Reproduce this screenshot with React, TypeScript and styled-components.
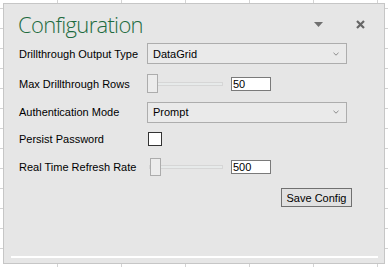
import React from "react";
import styled, { createGlobalStyle } from "styled-components";

const GlobalStyle = createGlobalStyle`
  html, body { margin: 0; padding: 0; }
  body {
    box-sizing: border-box;
    width: 388px;
    height: 267px;
    overflow: hidden;
    padding: 3px 0 0 3px;
    background-color: #ffffff;
    background-image:
      linear-gradient(to right, #d4d4d4 1px, transparent 1px),
      linear-gradient(to bottom, #d4d4d4 1px, transparent 1px);
    background-size: 64px 20px;
    background-position: 57px 8px;
    font-family: "Liberation Sans", Arial, sans-serif;
  }
`;

const Panel = styled.div`
  box-sizing: border-box;
  width: 382px;
  height: 261px;
  background: #e6e6e6;
  border: 1px solid #c6c6c6;
  display: flex;
  flex-direction: column;
`;

const Header = styled.div`
  display: flex;
  align-items: center;
  height: 29px;
  margin-top: 6px;
  padding: 0 19px 0 14px;
`;

const Title = styled.h1`
  flex: 1;
  margin: 0;
  font-family: "Segoe UI Light", "Open Sans", sans-serif;
  font-weight: 300;
  font-size: 22px;
  line-height: 29px;
  letter-spacing: -0.7px;
  color: #1d6b3e;
`;

const IconButton = styled.span<{ $gap: number }>`
  display: flex;
  align-items: center;
  justify-content: center;
  margin-left: ${(p) => p.$gap}px;
`;

const Form = styled.div`
  display: flex;
  flex-direction: column;
  padding-left: 15px;
`;

const Row = styled.div<{ $h: number }>`
  display: grid;
  grid-template-columns: 128px auto;
  align-items: center;
  height: ${(p) => p.$h}px;
`;

const Label = styled.span`
  font-size: 11px;
  color: #000;
  white-space: nowrap;
`;

const Combo = styled.div`
  box-sizing: border-box;
  width: 200px;
  height: 21px;
  display: flex;
  align-items: center;
  justify-content: space-between;
  padding: 0 7px 0 5px;
  background: #eaeaea;
  border: 1px solid #adadad;
  font-size: 11px;
  color: #000;
`;

const SliderGroup = styled.div`
  display: flex;
  align-items: center;
  gap: 8px;
`;

const Slider = styled.div<{ $h: number }>`
  position: relative;
  width: 76px;
  height: ${(p) => p.$h}px;
`;

const Track = styled.div`
  position: absolute;
  left: 2px;
  right: 0;
  top: 50%;
  height: 4px;
  margin-top: -2px;
  box-sizing: border-box;
  background: #e7eaea;
  border: 1px solid #d6d6d6;
`;

const Thumb = styled.div`
  position: absolute;
  top: 0;
  bottom: 0;
  width: 11px;
  box-sizing: border-box;
  background: #ececec;
  border: 1px solid #acacac;
`;

const NumBox = styled.div`
  box-sizing: border-box;
  width: 40px;
  height: 14px;
  background: #fff;
  border: 1px solid #7a7a7a;
  font-size: 11px;
  line-height: 12px;
  padding-left: 1px;
  color: #000;
`;

const Check = styled.div`
  box-sizing: border-box;
  width: 14px;
  height: 14px;
  margin-left: 1px;
  background: #fff;
  border: 1px solid #333;
`;

const ButtonRow = styled.div`
  display: flex;
  justify-content: flex-end;
  padding-right: 32px;
  margin-top: 7px;
`;

const Button = styled.button`
  box-sizing: border-box;
  width: 71px;
  height: 19px;
  padding: 0;
  background: #e1e1e1;
  border: 1px solid #707070;
  font-family: "Liberation Sans", Arial, sans-serif;
  font-size: 11px;
  color: #000;
`;

const BottomLine = styled.div`
  margin: auto 6px 5px 7px;
  height: 2px;
  background: #ffffff;
`;

const Chevron = () => (
  <svg width="6" height="4" viewBox="0 0 6 4">
    <path d="M0.5 0.8 L3 3.2 L5.5 0.8" fill="none" stroke="#8a8a8a" strokeWidth="1" />
  </svg>
);

const RangeInput = ({ h, thumbLeft, value }: { h: number; thumbLeft: number; value: string }) => (
  <SliderGroup>
    <Slider $h={h}>
      <Track />
      <Thumb style={{ left: thumbLeft }} />
    </Slider>
    <NumBox>{value}</NumBox>
  </SliderGroup>
);

export default function App() {
  return (
    <>
      <GlobalStyle />
      <Panel>
        <Header>
          <Title>Configuration</Title>
          <IconButton $gap={0}>
            <svg width="9" height="5" viewBox="0 0 9 5">
              <path d="M0 0 H9 L4.5 5 Z" fill="#707070" />
            </svg>
          </IconButton>
          <IconButton $gap={33}>
            <svg width="9" height="9" viewBox="0 0 9 9">
              <path d="M1 1 L8 8 M8 1 L1 8" stroke="#666666" strokeWidth="2.2" />
            </svg>
          </IconButton>
        </Header>
        <Form>
          <Row $h={29}>
            <Label>Drillthrough Output Type</Label>
            <Combo>
              <span>DataGrid</span>
              <Chevron />
            </Combo>
          </Row>
          <Row $h={31}>
            <Label>Max Drillthrough Rows</Label>
            <RangeInput h={19} thumbLeft={0} value="50" />
          </Row>
          <Row $h={26}>
            <Label>Authentication Mode</Label>
            <Combo>
              <span>Prompt</span>
              <Chevron />
            </Combo>
          </Row>
          <Row $h={27}>
            <Label>Persist Password</Label>
            <Check />
          </Row>
          <Row $h={29}>
            <Label>Real Time Refresh Rate</Label>
            <RangeInput h={18} thumbLeft={3} value="500" />
          </Row>
        </Form>
        <ButtonRow>
          <Button>Save Config</Button>
        </ButtonRow>
        <BottomLine />
      </Panel>
    </>
  );
}
